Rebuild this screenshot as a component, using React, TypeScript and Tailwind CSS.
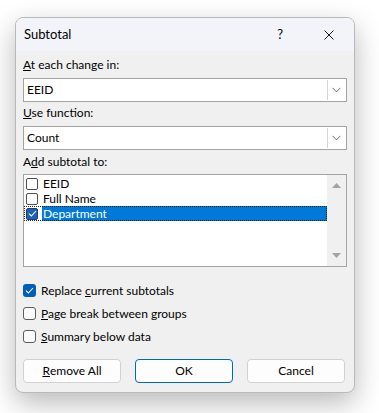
import React from "react";

const font = { fontFamily: 'Lato, "Noto Sans", "Liberation Sans", sans-serif' };

function Chevron() {
  return (
    <svg width="9" height="6" viewBox="0 0 9 6" fill="none">
      <path d="M0.5 0.8 L4.5 4.8 L8.5 0.8" stroke="#6b6b6b" strokeWidth="1" />
    </svg>
  );
}

function Select({ value }: { value: string }) {
  return (
    <div className="flex h-[24px] border border-[#a3a3a3] bg-white">
      <div className="flex flex-1 items-center pl-[3px] text-[12px] text-black">{value}</div>
      <div className="my-[1px] mr-[1px] flex w-[18px] items-center justify-center border-l border-[#d4d4d4] bg-white">
        <Chevron />
      </div>
    </div>
  );
}

function Check() {
  return (
    <svg width="9" height="7" viewBox="0 0 9 7" fill="none">
      <path d="M1 3.6 L3.4 6 L8 1" stroke="white" strokeWidth="1.1" />
    </svg>
  );
}

function Box({ checked }: { checked?: boolean }) {
  return checked ? (
    <div className="flex h-[13px] w-[13px] items-center justify-center rounded-[3px] bg-[#005fb8]">
      <Check />
    </div>
  ) : (
    <div className="h-[13px] w-[13px] rounded-[3px] border border-[#5c5c5c] bg-[#fbfbfb]" />
  );
}

function ListItem({ label, selected }: { label: string; selected?: boolean }) {
  return (
    <div
      className={
        "flex h-[15px] items-center pl-[2px] leading-[15px] " +
        (selected ? "outline-1 outline-dotted outline-[#222] -outline-offset-1" : "")
      }
    >
      <div className="flex w-[16px] items-center">
        {selected ? (
          <div className="flex h-[12px] w-[12px] items-center justify-center rounded-[2px] border border-[#1c3f75] bg-[#1a62b8]">
            <Check />
          </div>
        ) : (
          <div className="h-[12px] w-[12px] rounded-[2px] border border-[#4e4e4e] bg-white" />
        )}
      </div>
      <div
        className={
          "flex h-full flex-1 items-center pl-[1px] text-[12px] " +
          (selected ? "bg-[#0078d7] text-white" : "text-black")
        }
      >
        {label}
      </div>
    </div>
  );
}

function Option({ checked, children }: { checked?: boolean; children: React.ReactNode }) {
  return (
    <div className="flex h-[23px] items-center gap-[5px] text-[12px] text-black">
      <Box checked={checked} />
      <span>{children}</span>
    </div>
  );
}

function Button({ children, primary }: { children: React.ReactNode; primary?: boolean }) {
  return (
    <div
      className={
        "flex h-[24px] w-[98px] items-center justify-center rounded-[4px] border bg-[#fdfdfd] text-[12px] text-black " +
        (primary ? "border-[#0067c0]" : "border-[#d1d1d1]")
      }
    >
      {children}
    </div>
  );
}

export default function App() {
  return (
    <div className="h-[413px] w-[379px] bg-white pl-[15px] pt-[17px]" style={font}>
      <div className="w-[340px] overflow-hidden rounded-[8px] border border-[#b9b9b9] bg-[#f0f0f0] shadow-[0_10px_28px_rgba(0,0,0,0.28)]">
        <div className="flex h-[33px] items-center bg-[#f3f4f9] pl-[8px] text-[12px] text-black">
          <span className="flex-1 text-[13px]">Subtotal</span>
          <span className="mr-[41px] text-[13px]">?</span>
          <svg className="mr-[20px]" width="10" height="10" viewBox="0 0 10 10">
            <path d="M0.5 0.5 L9.5 9.5 M9.5 0.5 L0.5 9.5" stroke="#1a1a1a" strokeWidth="1" />
          </svg>
        </div>
        <div className="px-[7px] pb-[9px] pt-[6px]">
          <div className="h-[16px] text-[12px] leading-[16px] text-black">
            <span className="underline">A</span>t each change in:
          </div>
          <div className="mt-[5px]">
            <Select value="EEID" />
          </div>
          <div className="mt-[3px] h-[16px] text-[12px] leading-[16px] text-black">
            <span className="underline">U</span>se function:
          </div>
          <div className="mt-[5px]">
            <Select value="Count" />
          </div>
          <div className="mt-[4px] h-[16px] text-[12px] leading-[16px] text-black">
            A<span className="underline">d</span>d subtotal to:
          </div>
          <div className="mt-[4px] flex h-[93px] border border-[#a3a3a3] bg-white">
            <div className="flex-1 pt-[1px]">
              <ListItem label="EEID" />
              <ListItem label="Full Name" />
              <ListItem label="Department" selected />
            </div>
            <div className="flex w-[19px] flex-col items-center justify-between bg-[#f0f0f0] py-[8px]">
              <svg width="9" height="5" viewBox="0 0 9 5">
                <path d="M4.5 0 L9 5 L0 5 Z" fill="#a3a3a3" />
              </svg>
              <svg width="9" height="5" viewBox="0 0 9 5">
                <path d="M0 0 L9 0 L4.5 5 Z" fill="#a3a3a3" />
              </svg>
            </div>
          </div>
          <div className="mt-[12px]">
            <Option checked>
              Replace <span className="underline">c</span>urrent subtotals
            </Option>
            <Option>
              <span className="underline">P</span>age break between groups
            </Option>
            <Option>
              <span className="underline">S</span>ummary below data
            </Option>
          </div>
          <div className="mt-[11px] flex gap-[14px]">
            <Button>
              <span className="underline">R</span>emove All
            </Button>
            <Button primary>OK</Button>
            <Button>Cancel</Button>
          </div>
        </div>
      </div>
    </div>
  );
}
